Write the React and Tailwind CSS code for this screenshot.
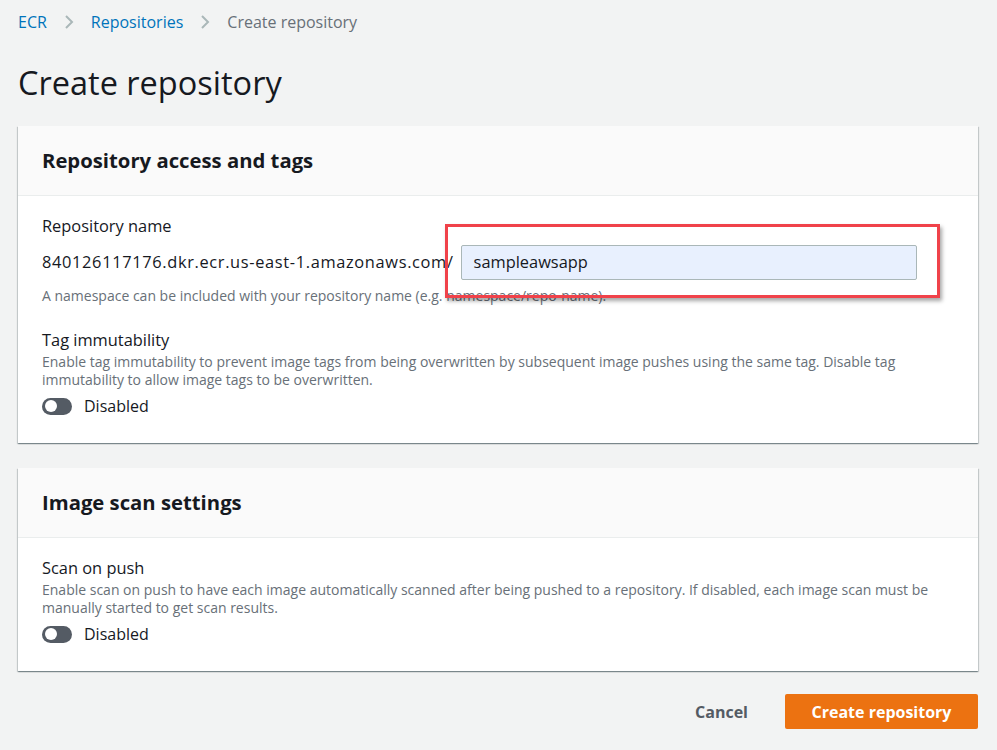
import React from "react";

const font = { fontFamily: '"Open Sans", "Noto Sans", sans-serif' };

function Chevron() {
  return (
    <svg width="12" height="16" viewBox="0 0 12 16" className="mx-[16px]">
      <path d="M3 2 L9 8 L3 14" fill="none" stroke="#aab7b8" strokeWidth="2" />
    </svg>
  );
}

function Toggle() {
  return (
    <div className="flex items-center gap-3">
      <div className="w-[30px] h-[17px] rounded-full bg-[#545b64] flex items-center px-[3px]">
        <div className="w-[12px] h-[12px] rounded-full bg-white" />
      </div>
      <span className="text-[16px] text-[#16191f]">Disabled</span>
    </div>
  );
}

function Card({ title, children }) {
  return (
    <div className="bg-white shadow-[0_1px_1px_0_rgba(0,28,36,0.3),1px_1px_1px_0_rgba(0,28,36,0.15),-1px_1px_1px_0_rgba(0,28,36,0.15)]">
      <div className="h-[70px] bg-[#fafafa] border-b border-[#eaeded] px-6 flex items-center">
        <h2 className="text-[20.3px] font-bold text-[#16191f]">{title}</h2>
      </div>
      <div className="px-6">{children}</div>
    </div>
  );
}

export default function App() {
  return (
    <div className="min-h-[750px] bg-[#f2f3f3] px-[18px] pt-[10px] text-[#16191f]" style={font}>
      <nav className="flex items-center h-[24px] text-[16px]">
        <span className="text-[#0073bb]">ECR</span>
        <Chevron />
        <span className="text-[#0073bb]">Repositories</span>
        <Chevron />
        <span className="text-[#687078]">Create repository</span>
      </nav>
      <h1 className="mt-[29px] text-[32.5px] leading-[40px] text-[#16191f]">Create repository</h1>
      <div className="mt-[23px] w-[960px]">
        <Card title="Repository access and tags">
          <div className="relative pt-[19px] pb-[25px]">
            <div className="text-[16.4px] leading-[22px]">Repository name</div>
            <div className="mt-[8px] flex items-center">
              <span className="text-[16.4px] tracking-[0.65px]">840126117176.dkr.ecr.us-east-1.amazonaws.com/</span>
              <div className="ml-[7px] w-[456px] h-[35px] bg-[#e8f0fe] border border-[#aab7b8] rounded-[2px] flex items-center px-[12px] text-[16.4px]">
                sampleawsapp
              </div>
            </div>
            <div className="mt-[7px] text-[14px] leading-[18px] text-[#687078]">
              A namespace can be included with your repository name (e.g. namespace/repo-name).
            </div>
            <div className="absolute left-[403px] top-[28px] w-[495px] h-[74px] border-[3px] border-[#f0424a] shadow-[2px_3px_4px_rgba(0,0,0,0.35)]" />
            <div className="mt-[24px] text-[16.4px] leading-[22px]">Tag immutability</div>
            <div className="mt-[2px] text-[14px] leading-[18px] text-[#687078]">
              Enable tag immutability to prevent image tags from being overwritten by subsequent image pushes using the same tag. Disable tag immutability to allow image tags to be overwritten.
            </div>
            <div className="mt-[5px]">
              <Toggle />
            </div>
          </div>
        </Card>
        <div className="h-[25px]" />
        <Card title="Image scan settings">
          <div className="pt-[19px] pb-[25px]">
            <div className="text-[16.4px] leading-[22px]">Scan on push</div>
            <div className="mt-[2px] text-[14px] leading-[18px] text-[#687078]">
              Enable scan on push to have each image automatically scanned after being pushed to a repository. If disabled, each image scan must be manually started to get scan results.
            </div>
            <div className="mt-[5px]">
              <Toggle />
            </div>
          </div>
        </Card>
        <div className="mt-[23px] flex justify-end items-center gap-[37px]">
          <span className="text-[16px] font-bold text-[#545b64]">Cancel</span>
          <button className="h-[35px] w-[193px] bg-[#ec7211] rounded-[2px] text-white text-[16px] font-bold">
            Create repository
          </button>
        </div>
      </div>
    </div>
  );
}
